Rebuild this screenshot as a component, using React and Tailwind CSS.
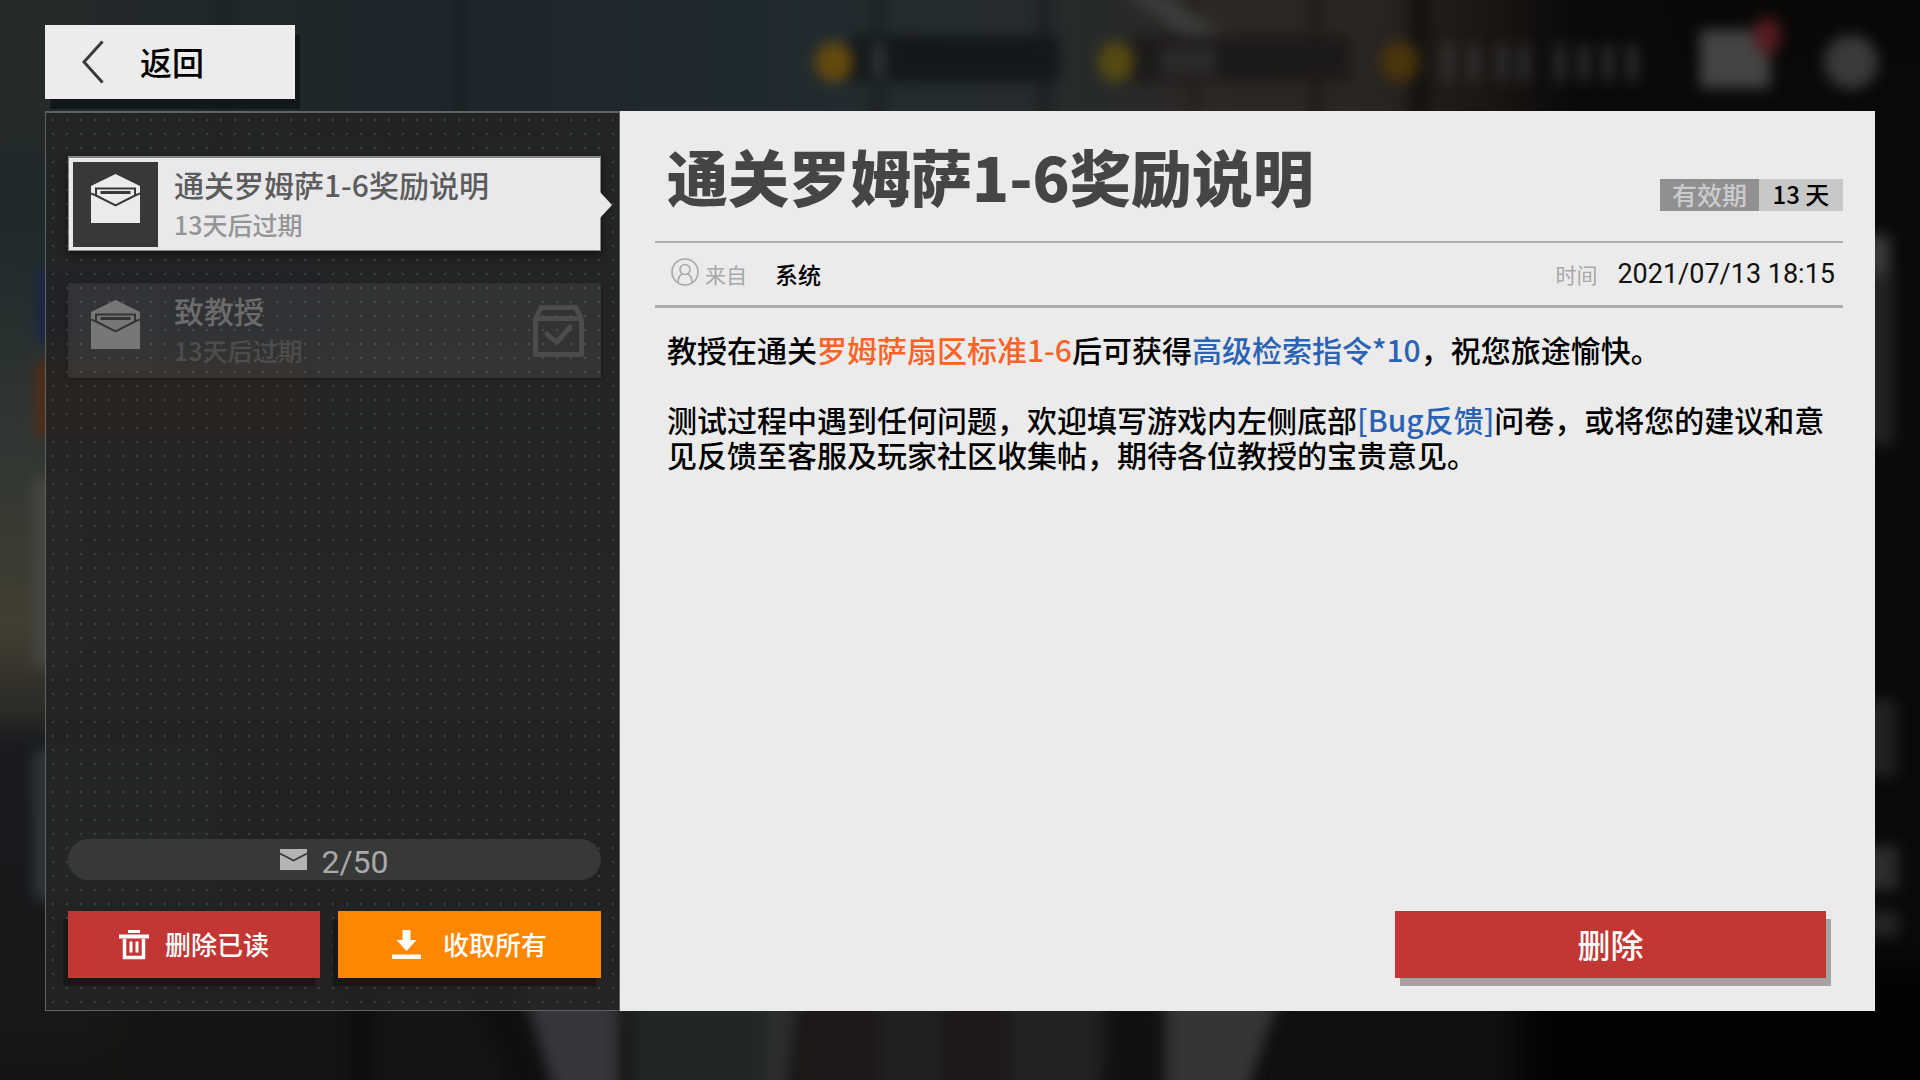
import { useState } from 'react';

const MAILS = [
  {
    id: 1,
    title: '通关罗姆萨1-6奖励说明',
    expires: '13天后过期',
    days: '13 天',
    from: '系统',
    time: '2021/07/13 18:15',
    read: false,
  },
  { id: 2, title: '致教授', expires: '13天后过期', read: true },
];

const CAPACITY = 50;

function Backdrop() {
  return (
    <svg
      aria-hidden="true"
      className="absolute inset-0 w-full h-full"
      viewBox="0 0 1920 1080"
      preserveAspectRatio="none"
    >
      <defs>
        <linearGradient id="sky" x1="0" y1="0" x2="0" y2="1">
          <stop offset="0" stopColor="#272b2b" />
          <stop offset="0.2" stopColor="#1f292b" />
          <stop offset="0.4" stopColor="#303633" />
          <stop offset="0.58" stopColor="#413e31" />
          <stop offset="0.66" stopColor="#2b2a27" />
          <stop offset="0.69" stopColor="#191b1f" />
          <stop offset="0.86" stopColor="#171819" />
          <stop offset="0.92" stopColor="#1a1917" />
          <stop offset="1" stopColor="#151412" />
        </linearGradient>
        <linearGradient id="top" x1="0" y1="0" x2="1" y2="0">
          <stop offset="0" stopColor="#272b2a" />
          <stop offset="0.15" stopColor="#20282b" />
          <stop offset="0.24" stopColor="#1e262c" />
          <stop offset="0.4" stopColor="#1f2a2f" />
          <stop offset="0.5" stopColor="#262d2f" />
          <stop offset="0.57" stopColor="#272a2a" />
          <stop offset="0.61" stopColor="#2c2826" />
          <stop offset="0.7" stopColor="#2b2623" />
          <stop offset="0.77" stopColor="#161311" />
          <stop offset="0.8" stopColor="#0b0a09" />
          <stop offset="1" stopColor="#090807" />
        </linearGradient>
        <filter id="soft" x="-50%" y="-50%" width="200%" height="200%" colorInterpolationFilters="sRGB">
          <feGaussianBlur stdDeviation="7" />
        </filter>
        <filter id="wide" x="-50%" y="-50%" width="200%" height="200%" colorInterpolationFilters="sRGB">
          <feGaussianBlur stdDeviation="16" />
        </filter>
      </defs>
      <rect width="1920" height="1080" fill="url(#sky)" />
      <g filter="url(#wide)">
        <rect x="-60" y="-60" width="2040" height="210" fill="url(#top)" />
        <rect x="1700" y="60" width="300" height="1100" fill="#0b0a09" />
        <rect x="130" y="960" width="400" height="200" fill="#131413" />
        <rect x="1240" y="960" width="300" height="200" fill="#10100f" />
        <rect x="1520" y="960" width="460" height="200" fill="#030303" />
      </g>
      <g filter="url(#soft)">
        {/* window frames */}
        <rect x="456" y="-20" width="8" height="160" fill="#151c1f" />
        <rect x="220" y="-20" width="7" height="160" fill="#1b1f20" />
        <rect x="870" y="-20" width="16" height="160" fill="#1e2425" />
        <rect x="1038" y="-20" width="12" height="160" fill="#1a2021" />
        <rect x="1190" y="-20" width="8" height="160" fill="#201d1b" />
        <rect x="1310" y="-20" width="12" height="160" fill="#1f1b19" />
        <rect x="1410" y="-20" width="20" height="160" fill="#151210" />
        <path d="M1120 -10H1160L1230 40H1190Z" fill="#3b3c3a" />
        {/* resource bars */}
        <rect x="850" y="36" width="210" height="46" fill="#13181b" />
        <rect x="1130" y="36" width="220" height="46" fill="#1c1a19" />
        <ellipse cx="834" cy="62" rx="19" ry="20" fill="#654a0d" />
        <ellipse cx="1116" cy="62" rx="18" ry="20" fill="#564a12" />
        <ellipse cx="1400" cy="62" rx="19" ry="20" fill="#4a350c" />
        <rect x="874" y="44" width="9" height="34" fill="#3a4042" />
        <rect x="1160" y="46" width="56" height="30" fill="#2c2a29" />
        <rect x="1700" y="30" width="70" height="58" fill="#444444" />
        <ellipse cx="1767" cy="36" rx="14" ry="18" fill="#561d20" />
        <circle cx="1851" cy="62" r="27" fill="#3a3a3a" />
        {/* side menu */}
        <rect x="36" y="268" width="290" height="74" fill="#1b2645" />
        <rect x="36" y="362" width="270" height="74" fill="#552c17" />
        <rect x="34" y="478" width="40" height="188" fill="#464743" />
        <rect x="34" y="750" width="180" height="150" fill="#30363a" />
        <rect x="1860" y="235" width="30" height="40" fill="#3a3a3a" />
        <rect x="1860" y="275" width="34" height="170" fill="#212222" />
        <rect x="1860" y="700" width="36" height="76" fill="#222222" />
        <rect x="1860" y="846" width="38" height="44" fill="#2c2c2c" />
        <rect x="1860" y="912" width="38" height="24" fill="#262626" />
        {/* lower scene */}
        <rect x="350" y="980" width="24" height="140" fill="#0d0f0f" />
        <path d="M470 980H530L560 1110H520Z" fill="#0e1010" />
        <path d="M520 980H618V1110H560Z" fill="#34363a" />
        <path d="M632 980H800L784 1110H632Z" fill="#222627" />
        <path d="M768 980H800L784 1110H764Z" fill="#2c2e2d" />
        <path d="M804 980H1080V1110H790Z" fill="#1c1918" />
        <rect x="880" y="980" width="60" height="140" fill="#212121" />
        <rect x="1010" y="980" width="90" height="140" fill="#232322" />
        <rect x="1112" y="980" width="48" height="140" fill="#0f1113" />
        <path d="M1166 980H1286L1240 1110H1166Z" fill="#333537" />
      </g>
      <g filter="url(#soft)" fill="#3a3a3a">
        {[1444, 1470, 1498, 1520, 1556, 1580, 1604, 1628].map(x => (
          <rect key={x} x={x} y="44" width="8" height="38" />
        ))}
      </g>
    </svg>
  );
}

function OpenMailIcon({ className, line }) {
  return (
    <svg viewBox="0 0 49 49" className={className} aria-hidden="true">
      <path d="M24.5 0L49 12V49H0V12Z" fill="currentColor" />
      <path d="M0 19.5L5 21.5L24.5 31.5L44 21.5L49 19.5" fill="none" stroke={line} strokeWidth="2" />
      <path d="M5 21V14.5H44V21" fill="none" stroke={line} strokeWidth="2" />
      <path d="M9.5 18.5H39.5" fill="none" stroke={line} strokeWidth="3" />
    </svg>
  );
}

function ClaimedIcon() {
  return (
    <svg viewBox="0 0 51 52" className="w-[51px] h-[52px] text-[#4b4c4b]" fill="none" stroke="currentColor" aria-hidden="true">
      <path d="M2.5 14V49.5H48.5V14" strokeWidth="5" strokeLinejoin="round" />
      <path d="M2.5 14L8 2.5H43L48.5 14" strokeWidth="5" strokeLinejoin="round" />
      <path d="M1 13.5H50" strokeWidth="5" />
      <path d="M14 29L23.5 37.5L37 22" strokeWidth="5" strokeLinecap="round" />
    </svg>
  );
}

function TrashIcon() {
  return (
    <svg viewBox="0 0 30 30" className="w-[30px] h-[30px]" fill="none" stroke="currentColor" aria-hidden="true">
      <path d="M9 1.5H21" strokeWidth="3" />
      <path d="M0 6.5H30" strokeWidth="4" />
      <path d="M5.5 9V27.5H24.5V9" strokeWidth="3.5" />
      <path d="M12 11.5V22.5M18 11.5V22.5" strokeWidth="3" />
    </svg>
  );
}

function DownloadIcon() {
  return (
    <svg viewBox="0 0 29 29" className="w-[29px] h-[29px]" fill="currentColor" aria-hidden="true">
      <path d="M10.5 0H18.5V10H24.5L14.5 21L4.5 10H10.5Z" />
      <path d="M0 24.5H29V29H0Z" />
    </svg>
  );
}

function SenderIcon() {
  return (
    <svg viewBox="0 0 28 28" className="w-7 h-7 mb-1 text-[#a6a8aa]" fill="none" stroke="currentColor" strokeWidth="1.6" aria-hidden="true">
      <circle cx="14" cy="14" r="13" />
      <circle cx="14" cy="11.5" r="5" />
      <path d="M7 25C7 19.5 9.5 16.5 11.5 15.7M21 25C21 19.5 18.5 16.5 16.5 15.7" />
    </svg>
  );
}

function MailItem({ mail, active, onSelect }) {
  if (active) {
    return (
      <button
        type="button"
        onClick={onSelect}
        className="relative w-full h-[95px] flex items-center gap-4 pl-1 text-left bg-[#e9e9eb] border border-t-2 border-[#858786] shadow-[0_4px_8px_rgba(0,0,0,0.5)]"
      >
        <span className="w-[85px] h-[85px] shrink-0 flex justify-center pt-3 bg-[#383838]">
          <OpenMailIcon className="w-[49px] h-[49px] text-[#ebebeb]" line="#383838" />
        </span>
        <span className="flex flex-col pb-[5px] font-medium">
          <span className="text-[30px] leading-[44px] text-[#5c5c5c]">{mail.title}</span>
          <span className="text-[25px] leading-9 text-[#959595]">{mail.expires}</span>
        </span>
        <svg viewBox="0 0 12 26" className="absolute left-full top-[34px] w-3 h-[26px]" aria-hidden="true">
          <path d="M0 0L12 13L0 26Z" fill="#e9e9eb" />
        </svg>
      </button>
    );
  }
  return (
    <button
      type="button"
      onClick={onSelect}
      className="w-full h-[95px] flex items-center gap-4 pl-[5px] pr-[17px] text-left bg-white/7 shadow-[0_2px_6px_rgba(0,0,0,0.3)]"
    >
      <span className="w-[85px] h-[85px] shrink-0 flex justify-center pt-3 bg-white/1">
        <OpenMailIcon className="w-[49px] h-[49px] text-[#777777]" line="#333435" />
      </span>
      <span className="flex-1 flex flex-col pb-[5px] font-medium">
        <span className="text-[30px] leading-[44px] text-[#6c6c6c]">{mail.title}</span>
        <span className="text-[25px] leading-9 text-[#4d4d4d]">{mail.expires}</span>
      </span>
      {mail.read && <ClaimedIcon />}
    </button>
  );
}

export default function App() {
  const [selectedId, setSelectedId] = useState(1);
  const current = MAILS[0];

  return (
    <div className="relative min-h-screen flex flex-col px-[45px] pt-[25px] pb-[69px] overflow-hidden bg-[#141414] font-['Noto_Sans_CJK_SC',sans-serif]">
      <Backdrop />

      <header className="relative flex mb-3">
        <button
          type="button"
          className="w-[250px] h-[74px] flex items-center gap-9 pl-[37px] bg-[#ebeceb] text-black text-[32px] leading-[46px] font-medium shadow-[5px_10px_0_#11181a]"
        >
          <svg viewBox="0 0 22 44" className="w-[22px] h-11" fill="none" stroke="#3a3a3a" strokeWidth="3" aria-hidden="true">
            <path d="M20.5 1.5L2 22L20.5 42.5" />
          </svg>
          <span className="pb-[2px]">返回</span>
        </button>
      </header>

      <main className="relative flex-1 flex">
        {/* Mail list */}
        <aside className="w-[575px] shrink-0 flex flex-col pl-[22px] pr-[18px] pt-[43px] pb-8 border border-t-2 border-[#5f6463] bg-[#232424]/90 bg-[radial-gradient(circle_at_center,#3f4242_1px,transparent_1px)] bg-size-[14px_14px]">
          <ul className="flex flex-col gap-8">
            {MAILS.map(mail => (
              <li key={mail.id}>
                <MailItem mail={mail} active={mail.id === selectedId} onSelect={() => setSelectedId(mail.id)} />
              </li>
            ))}
          </ul>

          <div className="mt-auto h-[41px] flex items-center justify-center gap-[14px] rounded-full bg-[#373838] text-[#a9a9a9]">
            <svg viewBox="0 0 27 21" className="w-[27px] h-[21px]" aria-hidden="true">
              <path d="M0 0H27V21H0Z" fill="#b4b4b4" />
              <path d="M0 4.5L13.5 11.5L27 4.5" fill="none" stroke="#373838" strokeWidth="1.6" />
            </svg>
            <span className="pt-1 font-[Roboto,sans-serif] text-[32px] leading-[38px]">{MAILS.length}/{CAPACITY}</span>
          </div>

          <div className="mt-[31px] flex gap-[18px] text-white text-[26px] leading-[38px] font-medium">
            <button type="button" className="w-[252px] h-[67px] flex items-center justify-center gap-4 bg-[#c23734] shadow-[-5px_8px_0_#171717]">
              <TrashIcon />
              <span className="pb-[2px]">删除已读</span>
            </button>
            <button type="button" className="flex-1 h-[67px] flex items-center justify-center gap-[22px] bg-[#ff8700] shadow-[-5px_8px_0_#171717]">
              <DownloadIcon />
              <span className="pb-[2px]">收取所有</span>
            </button>
          </div>
        </aside>

        {/* Mail content */}
        <article className="flex-1 flex flex-col pl-[35px] pr-8 pb-[33px] bg-[#ebebeb]">
          <div className="h-[132px] flex justify-between items-end pl-3 border-b-2 border-[#aaadaf]">
            <h1 className="self-center text-[61px] leading-[88px] font-black text-[#454545]">{current.title}</h1>
            <div className="h-8 flex mb-[30px] leading-[30px] font-medium">
              <span className="w-[99px] text-center bg-[#909092] text-[#cccccc] text-[25px]">有效期</span>
              <span className="w-[84px] text-center bg-[#c8c8c8] text-black text-[24px]">{current.days}</span>
            </div>
          </div>

          <div className="h-[65px] flex items-center justify-between pl-4 pr-2 border-b-3 border-[#aaadaf]">
            <div className="flex items-center">
              <SenderIcon />
              <span className="ml-[6px] text-[21px] leading-8 text-[#a6a8aa]">来自</span>
              <span className="ml-7 text-[23px] leading-8 font-medium text-black">{current.from}</span>
            </div>
            <div className="flex items-center">
              <span className="text-[21px] leading-8 text-[#a6a8aa]">时间</span>
              <time dateTime="2021-07-13T18:15" className="ml-5 font-[Roboto,sans-serif] text-[27px] leading-8 text-[#111111]">
                {current.time}
              </time>
            </div>
          </div>

          <div className="pt-6 pl-3 text-[30px] leading-[35px] font-medium text-black">
            <p>
              教授在通关<span className="text-[#f96327]">罗姆萨扇区标准1-6</span>后可获得
              <span className="text-[#2b63b4]">高级检索指令*10</span>，祝您旅途愉快。
            </p>
            <p className="mt-[35px]">
              测试过程中遇到任何问题，欢迎填写游戏内左侧底部<a href="#feedback" className="text-[#2b63b4]">[Bug反馈]</a>问卷，或将您的建议和意见反馈至客服及玩家社区收集帖，期待各位教授的宝贵意见。
            </p>
          </div>

          <button
            type="button"
            className="mt-auto self-end w-[431px] h-[67px] mr-[17px] pb-[2px] bg-[#c23734] text-white text-[33px] leading-[48px] font-medium shadow-[5px_8px_0_#a3a3a1]"
          >
            删除
          </button>
        </article>
      </main>
    </div>
  );
}
